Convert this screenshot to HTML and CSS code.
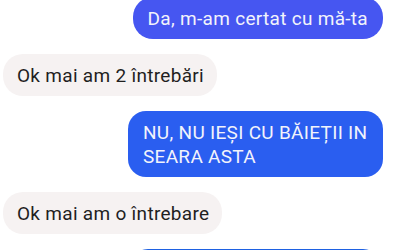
FILE: index.html
```html
<!DOCTYPE html>
<html lang="ro">
<head>
  <meta charset="UTF-8" />
  <meta name="viewport" content="width=device-width, initial-scale=1.0" />
  <title>Chat</title>
  <link rel="stylesheet" href="styles.css">
</head>
<body>
  <div class="chat">
    <div class="msg msg-out out-violet">Da, m-am certat cu mă-ta</div>
    <div class="msg msg-in">Ok mai am 2 întrebări</div>
    <div class="msg msg-out out-blue">NU, NU IEȘI CU BĂIEȚII IN SEARA ASTA</div>
    <div class="msg msg-in">Ok mai am o întrebare</div>
    <div class="msg msg-out out-deep"></div>
  </div>
</body>
</html>
```

FILE: styles.css
```css
* {
  box-sizing: border-box;
  margin: 0;
  padding: 0;
}

body {
  background: #ffffff;
  font-family: Roboto, 'Noto Sans', sans-serif;
  overflow: hidden;
}

.chat {
  display: flex;
  flex-direction: column;
  gap: 15px;
  margin-top: -3px;
  padding: 0 17px 0 3px;
}

.msg {
  max-width: 255px;
  padding: 10px 15px 8px;
  border-radius: 20px;
  font-size: 19px;
  letter-spacing: 0.3px;
  line-height: 24px;
}

.msg-in {
  align-self: flex-start;
  background: #f6f2f2;
  color: #1f1f1f;
  padding-left: 14px;
  padding-right: 13px;
}

.msg-out {
  align-self: flex-end;
  color: #f2f3fb;
}

.out-violet {
  background: #4656f1;
}

.out-blue {
  background: #2a5ef0;
  border-radius: 18px;
}

.out-deep {
  width: 255px;
  height: 42px;
  background: #1e61e2;
}
```
